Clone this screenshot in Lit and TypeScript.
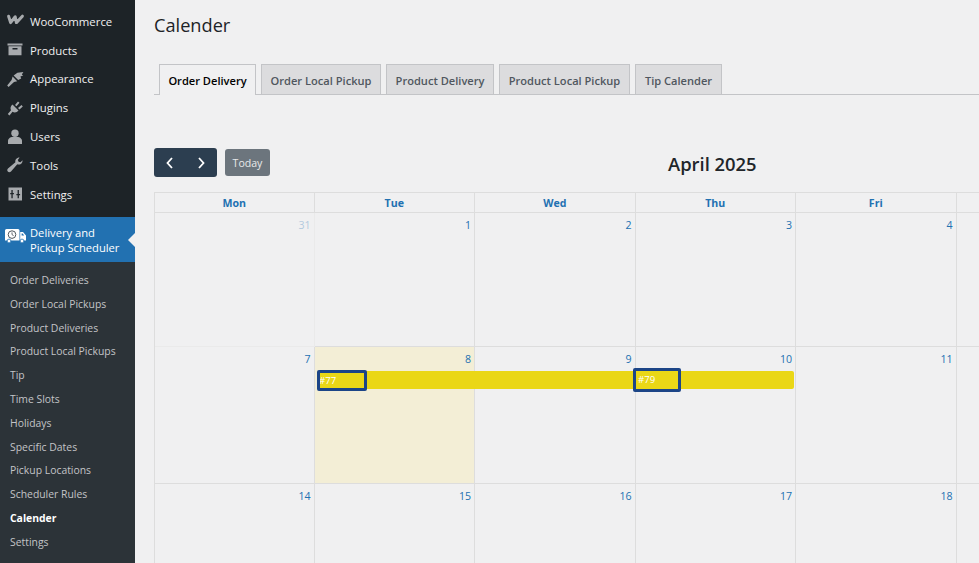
import { LitElement, html, css, svg } from 'lit';
import { customElement } from 'lit/decorators.js';

const icons: Record<string, unknown> = {
  woo: svg`<path d="M3.6 5.2 L5.6 11.6 L10.2 5.8 L11.4 11.6 L17.4 5.2" fill="none" stroke="currentColor" stroke-width="3" stroke-linejoin="round" stroke-linecap="round"/>`,
  box: svg`<path d="M2.5 3.5h15v2h-15z M3.5 6.2h13V15.2h-13z M7.5 8v1.4h5V8z" fill="currentColor" fill-rule="evenodd"/>`,
  brush: svg`<path d="M8.6 6.6 L12.4 3.8 L18.4 3 L16.8 5.4 L18.2 6.4 L15.4 7.6 L16.2 9.6 L13.2 11 Z M7.6 7.6 L12.2 12.2 L9 13 L3.6 18 L2.2 16.6 L6.6 11 Z" fill="currentColor"/>`,
  plug: svg`<path d="M7.5 6.5 L13.5 12.5 C12 14.5 9.5 15 7.5 13.8 L4.5 17.5 L2.8 16 L6 12.3 C5 10.5 5.5 8 7.5 6.5 Z M10 7 L13 3.5 L14.5 4.8 L11.5 8.3 Z M13 10 L16.5 7 L17.8 8.5 L14.5 11.5 Z" fill="currentColor"/>`,
  user: svg`<circle cx="10" cy="6.2" r="3.7" fill="currentColor"/><path d="M3 17 V14 C3 11.5 5.5 10 7.5 10 H12.5 C14.5 10 17 11.5 17 14 V17 Z" fill="currentColor"/>`,
  wrench: svg`<path d="M17.5 5.2 C17.8 7.4 16.3 9.6 13.8 9.6 C13.2 9.6 12.8 9.5 12.3 9.3 L6 16.4 C5 17.5 3.5 17.3 2.8 16.6 C2 15.8 2.1 14.4 3 13.6 L10.4 7.3 C9.8 5 11.5 2.5 14.6 2.5 L12.8 4.9 L13.6 6.8 L15.5 7.2 Z" fill="currentColor"/>`,
  sliders: svg`<path fill-rule="evenodd" d="M3.5 3.5h13.5v13h-13.5z M6.4 6v3H5.2v1.3h1.2v4h1.3v-4h1.2V9H7.7V6z M12.6 6v4h-1.2v1.3h1.2v3h1.3v-3h1.2V10h-1.2V6z" fill="currentColor"/>`,
  truck: svg`<path d="M0 1.5 A1.5 1.5 0 0 1 1.5 0 H13 A1.5 1.5 0 0 1 14.5 1.5 V11.5 H0 Z M15.2 3 H18 L21 6.5 V11.5 H15.2 Z" fill="#fff"/>
    <circle cx="7" cy="5.6" r="3.8" fill="none" stroke="#50575e" stroke-width="1"/><path d="M7 3.4V5.6l1.6 1" fill="none" stroke="#50575e" stroke-width=".9"/>
    <path d="M16.6 4.4h1l1.6 2h-2.6z" fill="#2271b1"/>
    <circle cx="4" cy="12" r="1.9" fill="#fff" stroke="#2271b1" stroke-width=".8"/><circle cx="17" cy="12" r="1.9" fill="#fff" stroke="#2271b1" stroke-width=".8"/>`,
};

const mainMenu = [
  ['woo', 'WooCommerce'],
  ['box', 'Products'],
  ['brush', 'Appearance'],
  ['plug', 'Plugins'],
  ['user', 'Users'],
  ['wrench', 'Tools'],
  ['sliders', 'Settings'],
];

const subMenu = [
  'Order Deliveries', 'Order Local Pickups', 'Product Deliveries', 'Product Local Pickups',
  'Tip', 'Time Slots', 'Holidays', 'Specific Dates', 'Pickup Locations', 'Scheduler Rules',
  'Calender', 'Settings',
];

const tabs = ['Order Delivery', 'Order Local Pickup', 'Product Delivery', 'Product Local Pickup', 'Tip Calender'];

const weeks = [
  { cls: 'first', days: ['31', '1', '2', '3', '4', ''] },
  { cls: 'second', days: ['7', '8', '9', '10', '11', ''] },
  { cls: 'third', days: ['14', '15', '16', '17', '18', ''] },
];

@customElement('app-root')
export class AppRoot extends LitElement {
  static styles = css`
    :host {
      display: flex;
      width: 979px;
      height: 563px;
      overflow: hidden;
      background: #f0f0f1;
      font-family: "Open Sans", "Noto Sans", sans-serif;
      font-size: 13px;
      color: #3c434a;
    }

    .side {
      flex: 0 0 135px;
      background: #1d2327;
      padding-top: 7px;
      box-sizing: border-box;
    }

    .item {
      display: flex;
      align-items: center;
      height: 28.8px;
      color: #f0f0f1;
      font-size: 11.4px;
    }

    .item svg {
      width: 20px;
      height: 20px;
      margin: 0 5px 0 5px;
      color: #a7aaad;
      flex: none;
    }

    .active {
      position: relative;
      display: flex;
      align-items: center;
      margin-top: 8.5px;
      height: 45px;
      padding-top: 1px;
      box-sizing: border-box;
      background: #2271b1;
      color: #fff;
      font-size: 11.2px;
      line-height: 15.5px;
    }

    .active svg {
      width: 21px;
      height: 15px;
      margin: 0 4px 8px 5px;
      flex: none;
    }

    .active::after {
      content: "";
      position: absolute;
      right: 0;
      top: 16px;
      border: 7px solid transparent;
      border-right-color: #f0f0f1;
      border-left-width: 0;
    }

    .sub {
      background: #2c3338;
      padding: 7px 0 9px;
    }

    .sub div {
      height: 23.8px;
      line-height: 23.8px;
      padding-left: 10px;
      font-size: 10.4px;
      color: #c3c4c7;
      white-space: nowrap;
    }

    .sub .current {
      color: #fff;
      font-weight: 700;
    }

    .main {
      flex: 1;
      min-width: 0;
      padding: 0 0 0 19px;
    }

    h1 {
      margin: 0;
      padding-top: 12px;
      height: 53px;
      box-sizing: border-box;
      font-size: 18.2px;
      font-weight: 400;
      line-height: 27px;
      color: #1d2327;
    }

    .tabs {
      display: flex;
      gap: 5px;
      height: 30px;
      padding-left: 5px;
      margin-top: 11px;
      border-bottom: 1px solid #c3c4c7;
    }

    .tab {
      display: flex;
      align-items: center;
      justify-content: center;
      height: 28px;
      padding-top: 1px;
      background: #dcdcde;
      border: 1px solid #c3c4c7;
      border-bottom: 0;
      box-sizing: content-box;
      font-size: 11.1px;
      font-weight: 600;
      color: #50575e;
      white-space: nowrap;
    }

    .tab.on {
      height: 29px;
      background: #f0f0f1;
      color: #000;
    }

    .toolbar {
      position: relative;
      display: flex;
      align-items: center;
      gap: 8px;
      margin-top: 53px;
      height: 29px;
    }

    .nav {
      display: flex;
      width: 63px;
      height: 29px;
      background: #2c3e50;
      border-radius: 3px;
      color: #fff;
    }

    .nav span {
      flex: 1;
      display: flex;
      align-items: center;
      justify-content: center;
    }

    .nav svg {
      width: 10px;
      height: 12px;
    }

    .today {
      width: 45px;
      height: 27px;
      display: flex;
      align-items: center;
      justify-content: center;
      background: #6c757d;
      border-radius: 3px;
      font-size: 10.6px;
      color: #e8e9ea;
    }

    .title {
      position: absolute;
      left: 514px;
      top: 1px;
      line-height: 29px;
      font-size: 18.4px;
      font-weight: 600;
      color: #212529;
      white-space: nowrap;
    }

    .cal {
      display: grid;
      grid-template-columns: 159.5px repeat(4, 160.5px) 40px;
      grid-template-rows: 20px 134px 137px 90px;
      margin-top: 15px;
      border-left: 1px solid #ddd;
      border-top: 1px solid #ddd;
      box-sizing: border-box;
      position: relative;
    }

    .head {
      border-right: 1px solid #ddd;
      border-bottom: 1px solid #ddd;
      text-align: center;
      font-size: 10.6px;
      font-weight: 700;
      line-height: 21px;
      color: #2271b1;
    }

    .day {
      border-right: 1px solid #ddd;
      border-bottom: 1px solid #ddd;
      padding: 4px 3px 0 0;
      text-align: right;
      font-size: 10.6px;
      line-height: 16px;
      color: #2271b1;
      box-sizing: border-box;
    }

    .day.muted {
      opacity: 0.3;
    }

    .day.today-cell {
      background: #f3eed6;
    }

    .bar {
      position: absolute;
      left: 162px;
      top: 178px;
      width: 477px;
      height: 18px;
      background: #ead716;
      border-radius: 2px;
    }

    .ev {
      position: absolute;
      box-sizing: border-box;
      border: 3px solid #1c4587;
      border-radius: 2px;
      color: #fff;
      font-size: 9.6px;
      overflow: hidden;
      white-space: nowrap;
    }

    .ev.a { left: 162px; width: 50px; top: 177px; height: 21px; line-height: 15px; text-indent: -1px; }
    .ev.b { left: 478px; width: 48px; top: 175px; height: 24px; line-height: 18px; padding-left: 2px; }
  `;

  render() {
    const widths = [97, 120, 108, 131, 87];
    return html`
      <nav class="side">
        ${mainMenu.map(
          ([icon, label]) => html`<div class="item"><svg viewBox="0 0 20 20">${icons[icon]}</svg>${label}</div>`
        )}
        <div class="active">
          <svg viewBox="0 0 21 15">${icons.truck}</svg>
          <span>Delivery and<br />Pickup Scheduler</span>
        </div>
        <div class="sub">
          ${subMenu.map((s) => html`<div class=${s === 'Calender' ? 'current' : ''}>${s}</div>`)}
        </div>
      </nav>
      <main class="main">
        <h1>Calender</h1>
        <div class="tabs">
          ${tabs.map(
            (t, i) => html`<div class="tab ${i === 0 ? 'on' : ''}" style="width:${widths[i] - 2}px">${t}</div>`
          )}
        </div>
        <div class="toolbar">
          <div class="nav">
            <span><svg viewBox="0 0 10 12"><path d="M7 1 L2.5 6 L7 11" fill="none" stroke="currentColor" stroke-width="1.8"/></svg></span>
            <span><svg viewBox="0 0 10 12"><path d="M3 1 L7.5 6 L3 11" fill="none" stroke="currentColor" stroke-width="1.8"/></svg></span>
          </div>
          <div class="today">Today</div>
          <div class="title">April 2025</div>
        </div>
        <div class="cal">
          ${['Mon', 'Tue', 'Wed', 'Thu', 'Fri', ''].map((d) => html`<div class="head">${d}</div>`)}
          ${weeks.map((w) =>
            w.days.map(
              (d) => html`<div class="day ${d === '31' ? 'muted' : ''} ${d === '8' ? 'today-cell' : ''}">${d}</div>`
            )
          )}
          <div class="bar"></div>
          <div class="ev a">#77</div>
          <div class="ev b">#79</div>
        </div>
      </main>
    `;
  }
}
